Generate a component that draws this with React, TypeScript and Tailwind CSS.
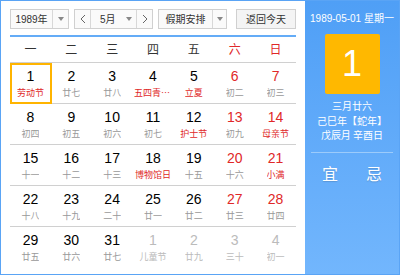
import React from "react";

type Day = { d: number; l: string; weekend?: boolean; fest?: boolean; other?: boolean };

const ROWS: Day[][] = [
  [
    { d: 1, l: "劳动节", fest: true },
    { d: 2, l: "廿七" },
    { d: 3, l: "廿八" },
    { d: 4, l: "五四青年节", fest: true },
    { d: 5, l: "立夏", fest: true },
    { d: 6, l: "初二", weekend: true },
    { d: 7, l: "初三", weekend: true },
  ],
  [
    { d: 8, l: "初四" },
    { d: 9, l: "初五" },
    { d: 10, l: "初六" },
    { d: 11, l: "初七" },
    { d: 12, l: "护士节", fest: true },
    { d: 13, l: "初九", weekend: true },
    { d: 14, l: "母亲节", weekend: true, fest: true },
  ],
  [
    { d: 15, l: "十一" },
    { d: 16, l: "十二" },
    { d: 17, l: "十三" },
    { d: 18, l: "博物馆日", fest: true },
    { d: 19, l: "十五" },
    { d: 20, l: "十六", weekend: true },
    { d: 21, l: "小满", weekend: true, fest: true },
  ],
  [
    { d: 22, l: "十八" },
    { d: 23, l: "十九" },
    { d: 24, l: "二十" },
    { d: 25, l: "廿一" },
    { d: 26, l: "廿二" },
    { d: 27, l: "廿三", weekend: true },
    { d: 28, l: "廿四", weekend: true },
  ],
  [
    { d: 29, l: "廿五" },
    { d: 30, l: "廿六" },
    { d: 31, l: "廿七" },
    { d: 1, l: "儿童节", other: true },
    { d: 2, l: "廿九", other: true },
    { d: 3, l: "三十", other: true },
    { d: 4, l: "初一", other: true },
  ],
];

const WEEK = ["一", "二", "三", "四", "五", "六", "日"];

function Caret() {
  return (
    <span className="w-0 h-0 border-l-[3px] border-r-[3px] border-t-[4px] border-l-transparent border-r-transparent border-t-[#888]" />
  );
}

function Chevron({ dir }: { dir: "left" | "right" }) {
  return (
    <svg width="6" height="10" viewBox="0 0 6 10" fill="none" stroke="#666" strokeWidth="1">
      {dir === "left" ? <polyline points="5,1 1,5 5,9" /> : <polyline points="1,1 5,5 1,9" />}
    </svg>
  );
}

export default function App() {
  return (
    <div className="w-[400px] h-[275px] flex border border-[#5aa4f5] font-['Liberation_Sans','Noto_Sans_CJK_SC',sans-serif]">
      {/* calendar */}
      <div className="w-[304px] bg-white px-[9px]">
        {/* toolbar */}
        <div className="h-[36px] pt-[8px] border-b-2 border-[#64acf7] flex items-start text-[10px] text-[#333]">
          <div className="w-[59px] h-[20px] flex border border-[#d0d0d0] bg-[#fafafa]">
            <div className="flex-1 flex items-center justify-center border-r border-[#d8d8d8]">1989年</div>
            <div className="w-[15px] flex items-center justify-center">
              <Caret />
            </div>
          </div>
          <div className="ml-[5px] w-[79px] h-[20px] flex border border-[#d0d0d0] bg-[#fafafa]">
            <div className="w-[16px] flex items-center justify-center border-r border-[#d8d8d8]">
              <Chevron dir="left" />
            </div>
            <div className="flex-1 flex items-center pl-[9px]">5月</div>
            <div className="w-[16px] flex items-center justify-center border-r border-[#d8d8d8]">
              <Caret />
            </div>
            <div className="w-[15px] flex items-center justify-center">
              <Chevron dir="right" />
            </div>
          </div>
          <div className="ml-[5px] w-[69px] h-[20px] flex border border-[#d0d0d0] bg-[#fafafa]">
            <div className="flex-1 flex items-center justify-center border-r border-[#d8d8d8]">假期安排</div>
            <div className="w-[13px] flex items-center justify-center">
              <Caret />
            </div>
          </div>
          <div className="ml-auto w-[60px] h-[20px] flex items-center justify-center border border-[#d0d0d0] bg-[#f4f4f4]">
            返回今天
          </div>
        </div>

        {/* week header */}
        <div className="h-[26px] grid grid-cols-7 border-b border-[#d0d0d0] text-[12px] text-[#333]">
          {WEEK.map((w, i) => (
            <div key={w} className={`flex items-center justify-center ${i >= 5 ? "text-[#e02828]" : ""}`}>
              {w}
            </div>
          ))}
        </div>

        {/* days */}
        {ROWS.map((row, ri) => (
          <div
            key={ri}
            className={`grid grid-cols-7 h-[41px] ${ri < ROWS.length - 1 ? "border-b border-[#d0d0d0]" : ""}`}
          >
            {row.map((c, ci) => {
              const numColor = c.other ? "text-[#bbb]" : c.weekend ? "text-[#e02828]" : "text-black";
              const lunarColor = c.other ? "text-[#bbb]" : c.fest ? "text-[#e02828]" : "text-[#999]";
              const selected = ri === 0 && ci === 0;
              return (
                <div key={ci} className="relative flex flex-col items-center pt-[5px]">
                  {selected && (
                    <span className="absolute left-0 right-[-1px] top-0 bottom-[-1px] border-2 border-[#ffb400]" />
                  )}
                  <div className={`text-[14px] leading-[17px] ${numColor}`}>{c.d}</div>
                  <div
                    className={`max-w-[38px] truncate text-[9px] leading-[13px] mt-[1px] font-['Noto_Sans_CJK_SC',sans-serif] ${lunarColor}`}
                  >
                    {c.l}
                  </div>
                </div>
              );
            })}
          </div>
        ))}
      </div>

      {/* side panel */}
      <div className="flex-1 bg-gradient-to-b from-[#4f9ff6] to-[#72b6fd] flex flex-col items-center text-white">
        <div className="mt-[11px] text-[10px] leading-[14px] whitespace-nowrap">1989-05-01 星期一</div>
        <div className="mt-[8px] w-[55px] h-[60px] rounded-[2px] bg-[#ffb800] flex items-center justify-center text-[36px] leading-none">
          1
        </div>
        <div className="mt-[5px] flex flex-col items-center text-[10px] leading-[14.5px] font-['Noto_Sans_CJK_SC',sans-serif]">
          <div>三月廿六</div>
          <div>己巳年【蛇年】</div>
          <div>戊辰月 辛酉日</div>
        </div>
        <div className="mt-[9px] w-[82px] h-px bg-[#9ccbfb]" />
        <div className="mt-[10px] flex text-[16px] leading-[20px] font-['Noto_Sans_CJK_SC',sans-serif] [text-shadow:0_1px_1px_rgba(0,0,0,0.15)]">
          <div className="w-[44px] text-center">宜</div>
          <div className="w-[44px] text-center">忌</div>
        </div>
      </div>
    </div>
  );
}
